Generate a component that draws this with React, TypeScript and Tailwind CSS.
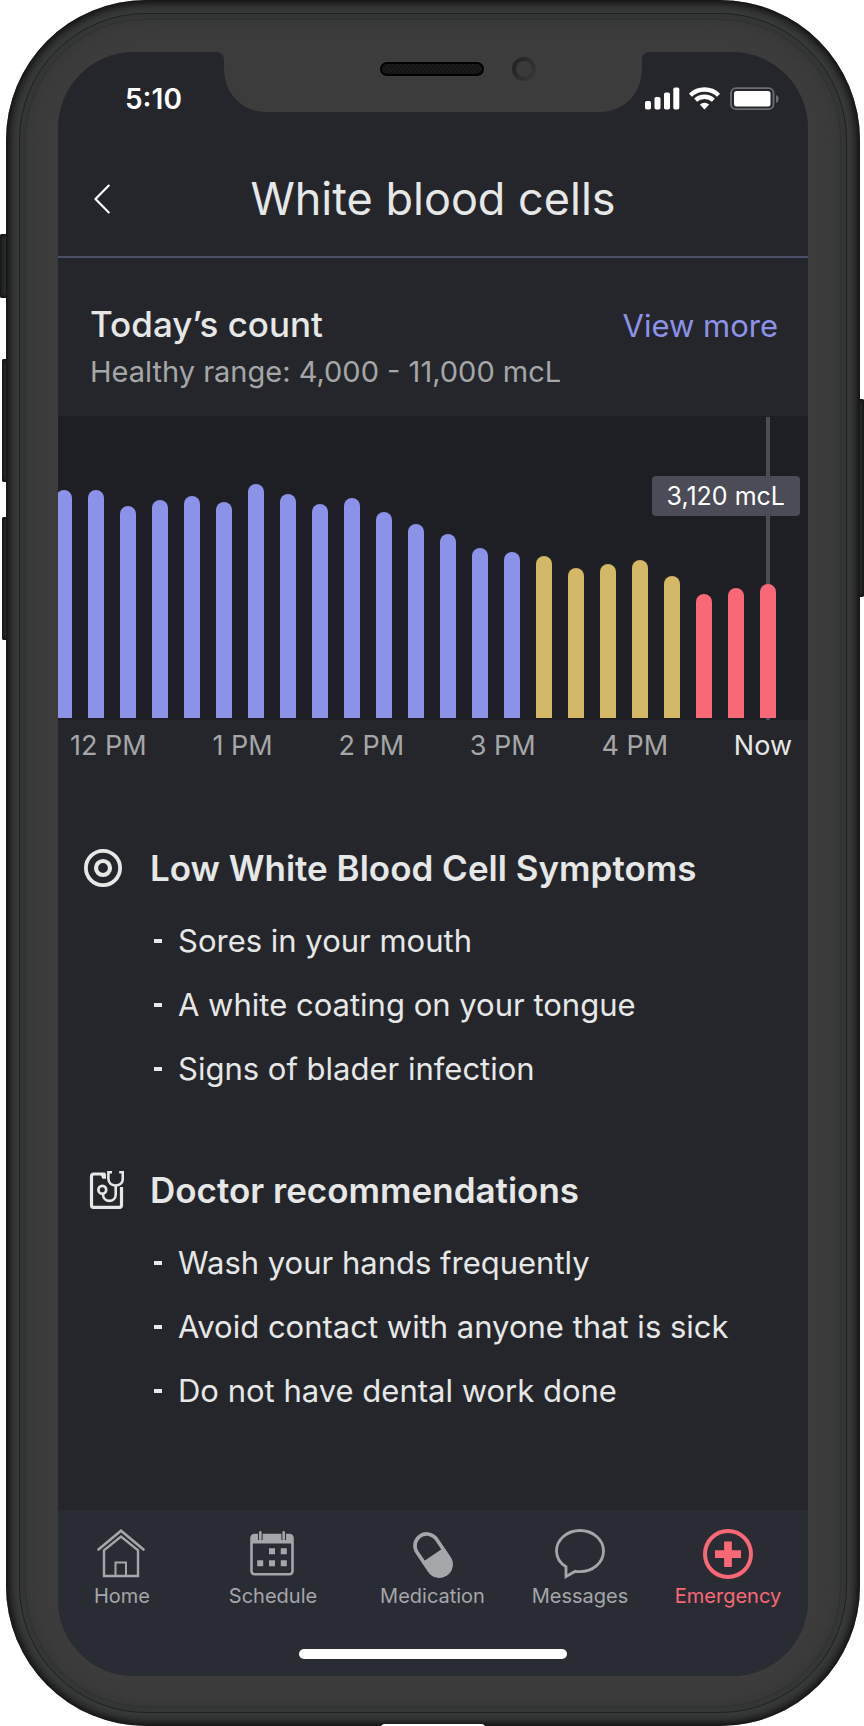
import { clsx } from "clsx"

type Level = "ok" | "warn" | "low"

const bars: { height: number; level: Level }[] = [
  { height: 228, level: "ok" },
  { height: 228, level: "ok" },
  { height: 212, level: "ok" },
  { height: 218, level: "ok" },
  { height: 222, level: "ok" },
  { height: 216, level: "ok" },
  { height: 234, level: "ok" },
  { height: 224, level: "ok" },
  { height: 214, level: "ok" },
  { height: 220, level: "ok" },
  { height: 206, level: "ok" },
  { height: 194, level: "ok" },
  { height: 184, level: "ok" },
  { height: 170, level: "ok" },
  { height: 166, level: "ok" },
  { height: 162, level: "warn" },
  { height: 150, level: "warn" },
  { height: 154, level: "warn" },
  { height: 158, level: "warn" },
  { height: 142, level: "warn" },
  { height: 124, level: "low" },
  { height: 130, level: "low" },
  { height: 134, level: "low" },
]

const barColors: Record<Level, string> = {
  ok: "bg-[#8b93e8]",
  warn: "bg-[#d3b868]",
  low: "bg-[#f96876]",
}

const hours = ["12 PM", "1 PM", "2 PM", "3 PM", "4 PM"]

const symptoms = ["Sores in your mouth", "A white coating on your tongue", "Signs of blader infection"]

const recommendations = [
  "Wash your hands frequently",
  "Avoid contact with anyone that is sick",
  "Do not have dental work done",
]

function TargetIcon() {
  return (
    <svg viewBox="0 0 38 38" className="size-[38px]" fill="none" stroke="currentColor">
      <circle cx="19" cy="19" r="17.1" strokeWidth="3.8" />
      <circle cx="19" cy="19" r="7" strokeWidth="4.2" />
    </svg>
  )
}

function StethoscopeIcon() {
  return (
    <svg viewBox="0 0 40 38" className="h-[38px] w-10" fill="none" stroke="currentColor">
      <path d="M21 3H9.500a2 2 0 0 0-2 2v29.300a2 2 0 0 0 2 2h26a2 2 0 0 0 2-2V16" strokeWidth="3.200" />
      <path d="M16 2.500h6v5.200h-3.500z" fill="currentColor" stroke="none" />
      <path d="M28 1.300h-3.600v6.500c0 9 14.400 9 14.400 0V1.300H35.200" strokeWidth="2.600" />
      <path d="M31.700 14v9.500c0 8.500-12.500 8.500-12.700 0" strokeWidth="2.600" />
      <circle cx="18.300" cy="18.800" r="3.900" strokeWidth="2.700" />
    </svg>
  )
}

function HomeIcon() {
  return (
    <svg viewBox="2 0 50 50" className="size-[50px]" fill="none" stroke="currentColor">
      <path d="M3.500 20.500L26 1.800l22.500 18.700" strokeWidth="2.600" strokeLinecap="round" />
      <path d="M9 47V21.200L26 7.500l17 13.700V47z" strokeWidth="2.400" />
      <path d="M20.500 46.500V33.400h10.500v13.100" strokeWidth="2" />
    </svg>
  )
}

function CalendarIcon() {
  return (
    <svg viewBox="1 0 50 50" className="size-[50px]" fill="none" stroke="currentColor">
      <rect x="4.500" y="6" width="41" height="39.300" rx="3" strokeWidth="2.600" />
      <path d="M4.500 6h41v8.500h-41z" fill="currentColor" stroke="none" />
      <path d="M13.300 1.500v9.500M36.700 1.500v9.500" stroke="#2a2c34" strokeWidth="4.600" />
      <path d="M13.300 3.200v6.500M36.700 3.200v6.500" strokeWidth="2.600" strokeLinecap="round" />
      <path
        d="M22 19.300h6v6h-6zM33.800 19.300h6v6h-6zM10.200 31.200h6v6h-6zM22 31.200h6v6h-6zM33.800 31.200h6v6h-6z"
        fill="currentColor"
        stroke="none"
      />
    </svg>
  )
}

function PillIcon() {
  return (
    <svg viewBox="0 0 50 50" className="size-[50px]" fill="none" stroke="currentColor">
      <g transform="rotate(-34 25 26)">
        <rect x="13.300" y="3" width="23.400" height="46" rx="11.700" strokeWidth="3.600" />
        <path d="M12 26h26v11.500a13 13 0 0 1-26 0z" fill="currentColor" stroke="none" />
      </g>
    </svg>
  )
}

function MessageIcon() {
  return (
    <svg viewBox="0 0 50 50" className="size-[50px]" fill="none" stroke="currentColor">
      <path
        d="M25 1.500C12 1.500 1.500 10.500 1.500 22c0 6.500 3.500 12 9.500 15.800v9.700l9.300-5.200c1.500.3 3 .4 4.700.4 13 0 23.500-9.200 23.500-20.700S38 1.500 25 1.500z"
        strokeWidth="2.800"
      />
    </svg>
  )
}

function EmergencyIcon() {
  return (
    <svg viewBox="0 0 50 50" className="size-[50px]" fill="none" stroke="currentColor">
      <circle cx="25" cy="25" r="23" strokeWidth="4" />
      <path d="M25 12.500v25.500M12 25.200h26" strokeWidth="7.800" />
    </svg>
  )
}

const tabs = [
  { label: "Home", icon: HomeIcon, active: false },
  { label: "Schedule", icon: CalendarIcon, active: false },
  { label: "Medication", icon: PillIcon, active: false },
  { label: "Messages", icon: MessageIcon, active: false },
  { label: "Emergency", icon: EmergencyIcon, active: true },
]

function Notch() {
  return (
    <svg
      viewBox="0 0 434 60"
      className="absolute top-0 left-1/2 h-[60px] w-[434px] -translate-x-1/2"
      aria-hidden="true"
    >
      <defs>
        <pattern id="mesh" width="4" height="4" patternUnits="userSpaceOnUse">
          <rect width="4" height="4" fill="#151515" />
          <path d="M0 0l4 4" stroke="#202020" strokeWidth="1" />
        </pattern>
        <linearGradient id="lens" x1="0" x2="1" y1="0" y2="0.6">
          <stop offset="0" stopColor="#1f1f1f" />
          <stop offset="1" stopColor="#363636" />
        </linearGradient>
      </defs>
      <path
        d="M0 0c5 0 8 3 8 8v8c0 26 18 44 43 44h332c25 0 43-18 43-44V8c0-5 3-8 8-8z"
        fill="#3c3c3c"
      />
      <rect x="165" y="11" width="102" height="12" rx="6" fill="url(#mesh)" stroke="#000" strokeWidth="2" />
      <circle cx="308" cy="17" r="12" fill="url(#lens)" />
      <circle cx="308" cy="17" r="8" fill="#3a3a3a" />
    </svg>
  )
}

function StatusBar() {
  return (
    <div className="flex items-center justify-between pt-[27px] pr-[29px] pl-[67px] text-white">
      <span className="text-[28px] leading-10 font-semibold">5:10</span>
      <svg viewBox="0 0 134 24" className="h-6 w-[134px]" fill="currentColor" aria-hidden="true">
        <rect x="0" y="14" width="6" height="8.500" rx="1.800" />
        <rect x="9.500" y="10" width="6" height="12.500" rx="1.800" />
        <rect x="19" y="5.500" width="6" height="17" rx="1.800" />
        <rect x="28.300" y="0.500" width="6" height="22" rx="1.800" />
        <g fill="none" stroke="currentColor" strokeWidth="4.400">
          <path d="M45.500 8.200a20 20 0 0 1 28 0" />
          <path d="M50.600 13.200a13 13 0 0 1 17.800 0" />
        </g>
        <path d="M59.500 22.500l-4.700-4.900a7 7 0 0 1 9.400 0z" />
        <rect x="86" y="1.200" width="42.500" height="21" rx="5" fill="none" stroke="#6b6c70" strokeWidth="1.800" />
        <rect x="89" y="4" width="36.500" height="15.500" rx="2.500" />
        <path d="M131 8c3.500 1.300 3.500 6.700 0 8z" fill="#6b6c70" />
      </svg>
    </div>
  )
}

function Chart() {
  return (
    <div>
      <div className="relative flex h-76 items-end justify-end gap-4 overflow-hidden bg-[#1e1f24] pr-8 pb-[2px]">
        <div className="absolute top-px right-[38px] bottom-0 w-1 bg-[#4b4c58]" />
        {bars.map((bar, i) => (
          <div
            key={i}
            className={clsx("relative w-4 shrink-0 rounded-t-full", barColors[bar.level])}
            style={{ height: bar.height }}
          />
        ))}
        <span className="absolute top-[60px] right-2 rounded bg-[#4b4c58] px-[15px] text-[25px] leading-10 text-white">
          3,120 mcL
        </span>
      </div>
      <div className="flex justify-between pt-2 pr-4 pl-3 text-[27px] leading-9 text-[#a5a6a8]">
        {hours.map((hour) => (
          <span key={hour}>{hour}</span>
        ))}
        <span className="text-[#e6e7e7]">Now</span>
      </div>
    </div>
  )
}

function InfoSection({ title, icon: Icon, items }: { title: string; icon: () => React.ReactNode; items: string[] }) {
  return (
    <section className="pl-[26px]">
      <div className="flex items-center">
        <span className="w-[66px]">
          <Icon />
        </span>
        <h2 className="text-[35px] leading-10 font-semibold">{title}</h2>
      </div>
      <ul className="pt-[21px] pl-[70px] text-[31px] leading-[64px]">
        {items.map((item) => (
          <li key={item} className="flex items-center gap-4">
            <span className="h-1 w-2 bg-[#e6e7e7]" />
            {item}
          </li>
        ))}
      </ul>
    </section>
  )
}

function TabBar() {
  return (
    <footer className="bg-[#2a2c34] pt-[19px] pb-[17px]">
      <nav className="grid grid-cols-[128fr_174fr_145fr_150fr_146fr] pr-[7px]">
        {tabs.map((tab) => (
          <a
            key={tab.label}
            href="#"
            className={clsx(
              "flex flex-col items-center gap-[3px] text-xl leading-7",
              tab.active ? "text-[#f96876]" : "text-[#a5a6aa]",
            )}
          >
            <tab.icon />
            {tab.label}
          </a>
        ))}
      </nav>
      <div className="mx-auto mt-[39px] h-[10px] w-[268px] rounded-full bg-white" />
    </footer>
  )
}

const sideButton = "absolute w-3 bg-[#2a2b2b] shadow-[inset_0_0_4px_1px_#0c0c0c]"

export default function App() {
  return (
    <div className="relative bg-white pr-1 pl-[6px] font-['Inter',sans-serif]">
      <div className={clsx(sideButton, "top-[234px] left-0 h-[64px] rounded-l-xs")} />
      <div className={clsx(sideButton, "top-[359px] left-[2px] h-[123px] rounded-l-xs")} />
      <div className={clsx(sideButton, "top-[517px] left-[2px] h-[123px] rounded-l-xs")} />
      <div className={clsx(sideButton, "top-[399px] right-0 h-[198px] rounded-r-xs")} />

      <div className="relative overflow-hidden rounded-[140px] bg-[#393a3a] p-[13px] shadow-[inset_0_0_10px_3px_#0a0a0a]">
        <div className="rounded-[127px] border border-[#1f2020] bg-[#343535] p-[5px]">
          <div className="rounded-[121px] border border-[#2f3030] bg-[#3c3c3c] px-8 pt-8 pb-[30px] shadow-[inset_0_0_16px_1px_#343535]">
            <div className="relative overflow-hidden rounded-[76px] bg-[#25262b] text-[#e6e7e7]">
              <Notch />
              <StatusBar />

              <header className="relative flex items-center justify-center border-b-2 border-[#4b5069] pt-12 pb-[25px]">
                <button type="button" aria-label="Back" className="absolute left-9">
                  <svg viewBox="0 0 16 30" className="h-[30px] w-4" fill="none" stroke="#fff" strokeWidth="2.200">
                    <path d="M15.300 0.900L1.500 15l13.800 14.100" />
                  </svg>
                </button>
                <h1 className="text-[45px] leading-[64px]">White blood cells</h1>
              </header>

              <main>
                <div className="pt-[46px] pr-[30px] pb-[26px] pl-8">
                  <div className="flex items-baseline justify-between">
                    <h2 className="text-[35px] leading-10 font-medium">Today’s count</h2>
                    <a href="#" className="text-[31px] leading-9 text-[#8b93e8]">
                      View more
                    </a>
                  </div>
                  <p className="mt-[10px] text-[29px] leading-9 text-[#a5a6a8]">Healthy range: 4,000 - 11,000 mcL</p>
                </div>
                <Chart />
                <div className="flex flex-col gap-[69px] pt-[84px] pb-[87px]">
                  <InfoSection title="Low White Blood Cell Symptoms" icon={TargetIcon} items={symptoms} />
                  <InfoSection title="Doctor recommendations" icon={StethoscopeIcon} items={recommendations} />
                </div>
              </main>

              <TabBar />
            </div>
          </div>
        </div>
        <div className="absolute -bottom-2 left-1/2 h-[10px] w-[106px] -translate-x-1/2 rounded-full bg-white" />
      </div>
    </div>
  )
}
